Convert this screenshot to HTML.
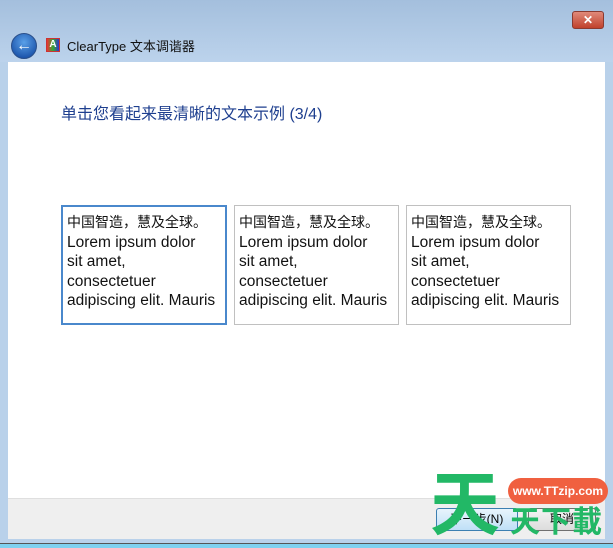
<!DOCTYPE html><html><head><meta charset="utf-8"><style>
body{margin:0;width:613px;height:547px;overflow:hidden;background:#b9d1ea;font-family:"Liberation Sans","Noto Sans CJK SC",sans-serif;position:relative}
.top{position:absolute;left:0;top:0;width:613px;height:62px;background:linear-gradient(#a4bfdd,#bcd3ec)}
.main{position:absolute;left:8px;top:62px;width:597px;height:436px;background:#fff}
.foot{position:absolute;left:8px;top:498px;width:597px;height:40px;background:#efefef;border-top:1px solid #dfdfdf}
.bot{position:absolute;left:0;top:543px;width:613px;height:4px;background:#7fd0ef;border-top:1px solid #555}
.box{position:absolute;top:205px;width:155px;height:107px;border:1px solid #c0c0c0;padding:7px 4px 4px;font-size:15.5px;line-height:19.5px;color:#111;white-space:nowrap;overflow:hidden}
.box span{font-size:14px}
.b{position:absolute;font-size:12px;border:1px solid #707070;border-radius:3px;height:21px;line-height:21px;text-align:center}
</style></head><body>
<div class="top"></div>
<div style="position:absolute;left:572px;top:11px;width:30px;height:16px;border:1px solid #8a3a30;border-radius:3px;background:linear-gradient(#e08a7a,#c0412c);color:#fff;font-size:12px;font-weight:bold;text-align:center;line-height:16px">✕</div>
<div style="position:absolute;left:11px;top:33px;width:24px;height:24px;border-radius:50%;background:radial-gradient(circle at 50% 35%,#5aa0e8,#0a3f9a);border:1px solid #2a4f8a;color:#fff;font-size:16px;line-height:24px;text-align:center;font-weight:bold">←</div>
<div style="position:absolute;left:46px;top:38px;width:12px;height:12px;border:1px solid #c33;background:linear-gradient(90deg,#e33,#3a3,#33c);color:#fff;font-size:10px;line-height:12px;text-align:center;font-weight:bold">A</div>
<div style="position:absolute;left:67px;top:36px;font-size:13px;color:#111">ClearType 文本调谐器</div>
<div class="main"></div>
<div style="position:absolute;left:61px;top:100px;font-size:16px;color:#1e3f8f">单击您看起来最清晰的文本示例 (3/4)</div>
<div class="box" style="left:61px;border:2px solid #4a88cc;width:154px;height:106px;padding:6px 4px 4px"><span>中国智造，慧及全球。</span><br>Lorem ipsum dolor<br>sit amet,<br>consectetuer<br>adipiscing elit. Mauris</div>
<div class="box" style="left:234px"><span>中国智造，慧及全球。</span><br>Lorem ipsum dolor<br>sit amet,<br>consectetuer<br>adipiscing elit. Mauris</div>
<div class="box" style="left:406px"><span>中国智造，慧及全球。</span><br>Lorem ipsum dolor<br>sit amet,<br>consectetuer<br>adipiscing elit. Mauris</div>
<div class="foot"></div>
<div class="b" style="left:436px;top:508px;width:80px;background:linear-gradient(#e8f4fc,#bfe0f7);border-color:#3c7fb1">下一步(N)</div>
<div class="b" style="left:528px;top:508px;width:66px;background:linear-gradient(#f4f4f4,#dcdcdc)">取消</div>
<div style="position:absolute;left:430px;top:470px;font-size:70px;font-weight:bold;color:#22b866;line-height:70px">天</div>
<div style="position:absolute;left:508px;top:478px;width:100px;height:26px;border-radius:13px;background:#f06040;color:#fff;font-size:12px;font-weight:bold;text-align:center;line-height:26px">www.TTzip.com</div>
<div style="position:absolute;left:510px;top:505px;font-size:30px;font-weight:bold;color:#22b866;line-height:36px;letter-spacing:1px">天下載</div>
<div class="bot"></div>
</body></html>
